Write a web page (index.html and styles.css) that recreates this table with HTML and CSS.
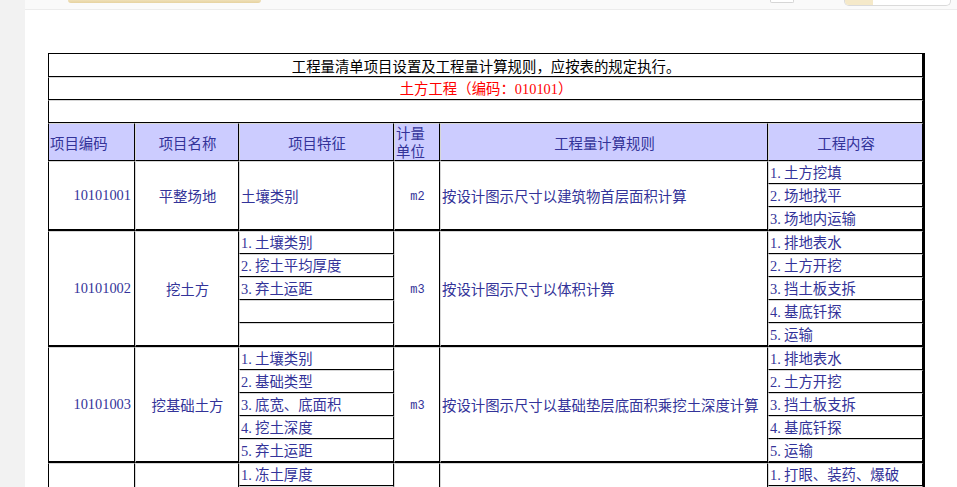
FILE: index.html
```html
<!DOCTYPE html>
<html lang="zh-CN">
<head>
<meta charset="utf-8">
<title>土方工程</title>
<link rel="stylesheet" href="styles.css">
</head>
<body>
<div class="page">
  <aside class="rail"></aside>
  <main class="main">
    <div class="topbar">
      <span class="btn-tan"></span>
      <span class="btn-box"></span>
      <span class="btn-split"><span class="split-tan"></span></span>
    </div>
    <div class="content">
      <table class="sheet">
        <colgroup>
          <col class="w1"><col class="w2"><col class="w3"><col class="w4"><col class="w5"><col class="w6">
        </colgroup>
        <tbody>
          <tr class="r-title"><td colspan="6" class="c1 top title">工程量清单项目设置及工程量计算规则，应按表的规定执行。</td></tr>
          <tr class="r"><td colspan="6" class="c1 red">土方工程（编码：<span class="lat">010101</span>）</td></tr>
          <tr class="r"><td colspan="6" class="c1"></td></tr>
          <tr class="r-head">
            <th class="c1 left">项目编码</th>
            <th>项目名称</th>
            <th>项目特征</th>
            <th class="left unit-head">计量<br>单位</th>
            <th>工程量计算规则</th>
            <th>工程内容</th>
          </tr>

          <tr class="r">
            <td rowspan="3" class="c1 code e">10101001</td>
            <td rowspan="3" class="ctr e">平整场地</td>
            <td rowspan="3" class="e">土壤类别</td>
            <td rowspan="3" class="ctr e"><span class="unit">m2</span></td>
            <td rowspan="3" class="e">按设计图示尺寸以建筑物首层面积计算</td>
            <td><span class="idx">1.</span>土方挖填</td>
          </tr>
          <tr class="r"><td><span class="idx">2.</span>场地找平</td></tr>
          <tr class="r end"><td class="e"><span class="idx">3.</span>场地内运输</td></tr>

          <tr class="r">
            <td rowspan="5" class="c1 code e">10101002</td>
            <td rowspan="5" class="ctr e">挖土方</td>
            <td><span class="idx">1.</span>土壤类别</td>
            <td rowspan="5" class="ctr e"><span class="unit">m3</span></td>
            <td rowspan="5" class="e">按设计图示尺寸以体积计算</td>
            <td><span class="idx">1.</span>排地表水</td>
          </tr>
          <tr class="r"><td><span class="idx">2.</span>挖土平均厚度</td><td><span class="idx">2.</span>土方开挖</td></tr>
          <tr class="r"><td><span class="idx">3.</span>弃土运距</td><td><span class="idx">3.</span>挡土板支拆</td></tr>
          <tr class="r"><td></td><td><span class="idx">4.</span>基底钎探</td></tr>
          <tr class="r end"><td class="e"></td><td class="e"><span class="idx">5.</span>运输</td></tr>

          <tr class="r">
            <td rowspan="5" class="c1 code e">10101003</td>
            <td rowspan="5" class="ctr e">挖基础土方</td>
            <td><span class="idx">1.</span>土壤类别</td>
            <td rowspan="5" class="ctr e"><span class="unit">m3</span></td>
            <td rowspan="5" class="e">按设计图示尺寸以基础垫层底面积乘挖土深度计算</td>
            <td><span class="idx">1.</span>排地表水</td>
          </tr>
          <tr class="r"><td><span class="idx">2.</span>基础类型</td><td><span class="idx">2.</span>土方开挖</td></tr>
          <tr class="r"><td><span class="idx">3.</span>底宽、底面积</td><td><span class="idx">3.</span>挡土板支拆</td></tr>
          <tr class="r"><td><span class="idx">4.</span>挖土深度</td><td><span class="idx">4.</span>基底钎探</td></tr>
          <tr class="r end"><td class="e"><span class="idx">5.</span>弃土运距</td><td class="e"><span class="idx">5.</span>运输</td></tr>

          <tr class="r">
            <td rowspan="3" class="c1"></td>
            <td rowspan="3"></td>
            <td><span class="idx">1.</span>冻土厚度</td>
            <td rowspan="3"></td>
            <td rowspan="3"></td>
            <td><span class="idx">1.</span>打眼、装药、爆破</td>
          </tr>
          <tr class="r"><td></td><td></td></tr>
          <tr class="r"><td></td><td></td></tr>
        </tbody>
      </table>
    </div>
  </main>
</div>
</body>
</html>
```

FILE: styles.css
```css
html, body {
  margin: 0;
  padding: 0;
  height: 100%;
  overflow: hidden;
  background: #ffffff;
}

.page {
  display: flex;
  height: 100%;
  font-family: "Noto Sans CJK SC", "Noto Sans", sans-serif;
}

.rail {
  flex: 0 0 25px;
  background: #f2f2f2;
}

.main {
  flex: 1 1 auto;
  display: flex;
  flex-direction: column;
  min-width: 0;
}

.topbar {
  flex: 0 0 auto;
  height: 9px;
  background: #fafafa;
  border-bottom: 1px solid #ececec;
  display: flex;
  align-items: flex-start;
}

.btn-tan {
  margin-left: 43px;
  width: 193px;
  height: 3px;
  background: linear-gradient(#efe0b8, #e6d2a0);
  border-radius: 0 0 5px 5px;
}

.btn-box {
  margin-left: 509px;
  width: 24px;
  height: 3px;
  box-sizing: border-box;
  background: #ffffff;
  border: 1px solid #d6d6d6;
  border-top: none;
  border-radius: 0 0 2px 2px;
}

.btn-split {
  margin-left: 50px;
  width: 107px;
  height: 6px;
  box-sizing: border-box;
  background: #ffffff;
  border: 1px solid #dadada;
  border-top: none;
  border-radius: 0 0 5px 5px;
  overflow: hidden;
  display: flex;
}

.split-tan {
  width: 28px;
  background: #f5e9c9;
}

.content {
  flex: 0 0 auto;
  padding: 43px 0 0 23px;
}

.sheet {
  table-layout: fixed;
  border-collapse: separate;
  border-spacing: 0;
  width: 877px;
  border-right: 2px solid #000000;
  font-size: 14.4px;
  line-height: 17px;
  color: #333399;
}

.w1 { width: 87px; }
.w2 { width: 104px; }
.w3 { width: 155px; }
.w4 { width: 46px; }
.w5 { width: 328px; }
.w6 { width: 155px; }

.sheet td,
.sheet th {
  padding: 0 0 0 1px;
  border-top: 1px solid #d6d6d6;
  border-left: 1px solid #d6d6d6;
  border-right: 1px solid #000000;
  border-bottom: 1px solid #000000;
  text-align: left;
  vertical-align: middle;
  white-space: nowrap;
  overflow: hidden;
  font-weight: normal;
}

.sheet td.c1,
.sheet th.c1 {
  border-left-color: #000000;
}

.sheet td.top {
  border-top-color: #000000;
}

.sheet td.e {
  border-bottom-width: 2px;
}

.r-title { height: 24px; }
.r { height: 23px; }
.r.end { height: 24px; }
.r-head { height: 38px; }

.title {
  color: #000000;
  text-align: center !important;
}

.red {
  color: #ff0000;
  text-align: center !important;
}

.r-head th {
  background: #ccccff;
  color: #333399;
  text-align: center;
}

.r-head th.left {
  text-align: left;
}

.r-head th.unit-head {
  line-height: 18px;
}

.sheet td.ctr {
  text-align: center;
}

.sheet td.code {
  text-align: right;
  padding-right: 3px;
  font-family: "Liberation Serif", serif;
}

.lat {
  font-family: "Liberation Serif", serif;
}

.unit {
  font-family: "Liberation Mono", monospace;
  font-size: 12px;
}

.idx {
  display: inline-block;
  width: 14px;
  font-family: "Liberation Serif", serif;
}
```
